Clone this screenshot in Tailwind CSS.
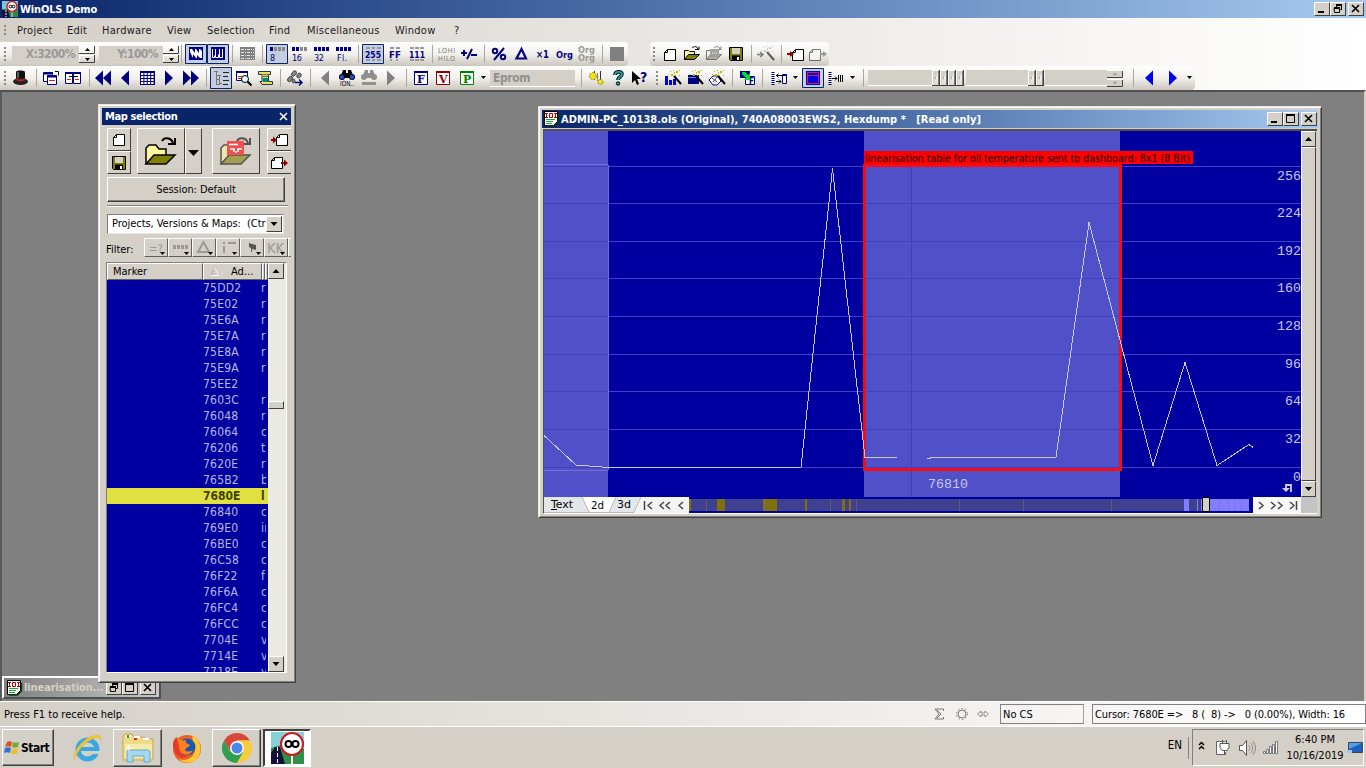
<!DOCTYPE html>
<html lang="en">
<head>
    <meta charset="UTF-8" />
    <title>WinOLS Demo</title>
    <script src="https://cdn.jsdelivr.net/npm/@tailwindcss/browser@4"></script>
</head>
<body class="w-[1366px] h-[768px] overflow-hidden flex flex-col bg-[#d4d0c8] text-black text-[11px] leading-none whitespace-nowrap font-['DejaVu_Sans_Condensed','DejaVu_Sans',sans-serif] [&_svg]:shrink-0">

<!-- Shared icons -->
<svg class="absolute w-0 h-0">
    <symbol id="app" viewBox="0 0 16 16">
        <rect width="16" height="16" fill="#7cc8d8"/><path d="M0 8h16v8H0z" fill="#2e8b45"/><path d="M0 9h6l2 7H0z" fill="#101040"/><path d="M4 9v7" stroke="#fff" stroke-dasharray="2 1"/><path d="M10 9v7" stroke="#ddd"/>
        <circle cx="10" cy="5.500" r="5" fill="#fff" stroke="#d02020" stroke-width="1.400"/><circle cx="8.400" cy="5.500" r="1.400" fill="none" stroke="#000"/><circle cx="11.600" cy="5.500" r="1.400" fill="none" stroke="#000"/>
    </symbol>
    <symbol id="doc" viewBox="0 0 16 16">
        <path d="M.5.500h13v10l-4 4h-9z" fill="#fff" stroke="#000"/><path d="M14.500 3v8l-4 4H2" fill="none" stroke="#064020" stroke-width="1.500"/><path d="M2 8.500h9M2 10.500h7M2 12.500h6" stroke="#20a040"/>
        <path d="M1 2.500h3M2.500 3v3M1 6.500h3M5.500 2.500h3v4h-3zM10 2.500h3M11.500 3v3M10 6.500h3" fill="none" stroke="#c00000"/>
    </symbol>
    <symbol id="page" viewBox="0 0 22 22"><path d="M8.500 5.500h8v11h-11v-8z" fill="#fff" stroke="#000"/><path d="M5.500 8.500h3v-3" fill="none" stroke="#000"/></symbol>
    <symbol id="open" viewBox="0 0 22 22">
        <path d="M3.500 16.500v-9h4l1 1h5v3" fill="#fff6a0" stroke="#000"/><path d="M3.500 16.500l4-5h11l-5 5z" fill="#808000" stroke="#000"/><path d="M11 5c2-2 5-2 6 1M14 6.500h4v-3" fill="none" stroke="#000"/>
    </symbol>
    <symbol id="save" viewBox="0 0 22 22"><path d="M4.500 4.500h13v13h-12l-1-1z" fill="#808000" stroke="#000"/><path d="M7 5h8v6H7z" fill="#d4d0c8"/><path d="M7 12.500h8V17H7z" fill="#000"/><path d="M12 14h2v3h-2z" fill="#fff"/></symbol>
    <symbol id="left" viewBox="0 0 22 22"><path d="M15 3.500v15l-8-7.500z"/></symbol>
    <symbol id="right" viewBox="0 0 22 22"><path d="M7 3.500v15l8-7.500z"/></symbol>
    <symbol id="wand" viewBox="0 0 22 22"><path d="M12 9l7 8" stroke="#000" stroke-width="2"/><path d="M8 4h1v1h-1zM11 3h1v1h-1zM14 4h2v2h-2zM9 7h2v2h-2zM13 8h1v1h-1zM17 8h1v1h-1zM6 7h1v1h-1zM12 5h1v2h-1zM17 3h1v1h-1z" fill="#c8b400"/></symbol>
    <symbol id="bino" viewBox="0 0 22 22"><path d="M7 4h3v3h2V4h3l3 8H4z"/><circle cx="6" cy="11" r="3"/><circle cx="16" cy="11" r="3"/></symbol>
    <symbol id="min" viewBox="0 0 14 12"><path d="M3 8h6v2H3z"/></symbol>
    <symbol id="max" viewBox="0 0 14 12"><path d="M2.500 1v8.500h8V1M2 1.500h9M2 2.500h9" fill="none" stroke="#000"/></symbol>
    <symbol id="rest" viewBox="0 0 14 12"><path d="M5 1.500h6M5.500 1v4M5 2.500h6M10.500 2v4.500H9M3 4.500h6M3 5.500h5.500V9.500h-5z" fill="none" stroke="#000"/></symbol>
    <symbol id="close" viewBox="0 0 14 12"><path d="M3 2l7 7M10 2l-7 7" fill="none" stroke="#000" stroke-width="1.600"/></symbol>
</svg>

<!-- Title bar -->
<div class="h-[18px] shrink-0 flex items-center pl-[2px] pr-[2px] bg-linear-to-r from-[#0a246a] to-[#a6caf0] text-white font-bold">
    <svg width="16" height="16"><use href="#app"/></svg>
    <span class="ml-[2px] flex-1 tracking-[-0.15px]">WinOLS Demo</span>
    <div class="flex [&>svg]:bg-[#d4d0c8] [&>svg]:border [&>svg]:border-t-white [&>svg]:border-l-white [&>svg]:border-r-[#404040] [&>svg]:border-b-[#404040]">
        <svg width="16" height="14"><use href="#min"/></svg>
        <svg width="16" height="14"><use href="#rest"/></svg>
        <svg width="16" height="14" class="ml-[2px]"><use href="#close"/></svg>
    </div>
</div>

<div class="h-[72px] shrink-0 flex flex-col bg-linear-to-r from-[#d4d0c8] to-white">
    <!-- Menu -->
    <div class="h-[24px] flex items-center text-[#202020] tracking-[0.25px]">
        <svg width="17" height="24" fill="#888"><path d="M4 7h2v2H4zM4 11h2v2H4zM4 15h2v2H4z"/></svg>
        <span class="w-[50px]">Project</span><span class="w-[35px]">Edit</span><span class="w-[65px]">Hardware</span><span class="w-[40px]">View</span><span class="w-[62px]">Selection</span><span class="w-[38px]">Find</span><span class="w-[88px]">Miscellaneous</span><span class="w-[59px]">Window</span><span>?</span>
    </div>

    <!-- Toolbar row 1 -->
    <div class="h-[24px] flex gap-[22px]">
        <div class="w-[628px] flex items-center rounded-r bg-linear-to-b from-white via-[#f2f0ec] to-[#cbc7be]">
            <svg width="12" height="22" fill="#888"><path d="M4 4h2v2H4zM4 8h2v2H4zM4 12h2v2H4zM4 16h2v2H4z"/></svg>
            <div class="w-[67px] h-[16px] pr-[4px] bg-[#d4d0c8] text-right font-bold text-[12px] leading-[17px] tracking-[-0.6px] text-[#999]">X:3200%</div>
            <svg width="16" height="17" viewBox="0 0 16 17"><path d="M.5 8V.5H15M.5 16V9.500H15" fill="none" stroke="#fff"/><path d="M0 7.500h15.500V0M0 16.500h15.500V9" fill="none" stroke="#404040"/><path d="M6 5h5L8.500 2zM6 12h5l-2.500 3z"/></svg>
            <div class="w-[64px] h-[16px] ml-[4px] pr-[5px] bg-[#d4d0c8] text-right font-bold text-[12px] leading-[17px] tracking-[-0.6px] text-[#999]">Y:100%</div>
            <svg width="16" height="17" viewBox="0 0 16 17"><path d="M.5 8V.5H15M.5 16V9.500H15" fill="none" stroke="#fff"/><path d="M0 7.500h15.500V0M0 16.500h15.500V9" fill="none" stroke="#404040"/><path d="M6 5h5L8.500 2zM6 12h5l-2.500 3z"/></svg>
            <svg width="6" height="18"><path d="M2.500 0v18" stroke="#aaa69e"/></svg>
            <svg width="22" height="22"><path d="M.5 1.500h21v19H.5z" fill="#c5cde0" stroke="#0a246a"/><path d="M4 4h14v13H4z" fill="#000080"/><path d="M5 6h2l3 4V6h1l3 4V6h1l2 2v7h-2l-3-3v3h-1l-3-4v4H8L5 9z" fill="#fff"/></svg>
            <svg width="22" height="22"><path d="M.5 1.500h21v19H.5z" fill="#c5cde0" stroke="#0a246a"/><path d="M4 4h14v13H4z" fill="#000080"/><path d="M5.500 6v8.500h2v-2M8.500 6v8.500h3v-3M12.500 6v8.500h3V6" fill="none" stroke="#fff"/></svg>
            <svg width="7" height="18"><path d="M3.500 0v18" stroke="#aaa69e"/></svg>
            <svg width="22" height="22"><path d="M4 4h15v13H4z" fill="#808080"/><path d="M5 6.500h13M5 9.500h13M5 12.500h13M5 15.500h13" stroke="#e8e6e2" stroke-dasharray="3 1 1 1"/></svg>
            <svg width="8" height="18"><path d="M4.500 0v18" stroke="#aaa69e"/></svg>
            <svg width="22" height="22"><path d="M.5 1.500h21v19H.5z" fill="#c5cde0" stroke="#0a246a"/><path d="M4 4h3v4H4z" fill="#000080"/><path d="M8 4h3v4H8zM12 4h3v4h-3zM16 4h3v4h-3z" fill="#888"/><text x="4" y="18" font-size="9" fill="#000080">8</text></svg>
            <svg width="22" height="22"><path d="M4 4h3v4H4zM8 4h3v4H8z" fill="#000080"/><path d="M12 4h3v4h-3zM16 4h3v4h-3z" fill="#888"/><text x="4" y="18" font-size="9" textLength="10" fill="#000080">16</text></svg>
            <svg width="22" height="22"><path d="M4 4h3v4H4zM8 4h3v4H8zM12 4h3v4h-3zM16 4h3v4h-3z" fill="#000080"/><text x="4" y="18" font-size="9" textLength="10" fill="#000080">32</text></svg>
            <svg width="22" height="22"><path d="M4 4h3v4H4zM8 4h3v4H8zM12 4h3v4h-3zM16 4h3v4h-3z" fill="#000080"/><text x="5" y="18" font-size="9" textLength="10" fill="#000080">Fl.</text></svg>
            <svg width="8" height="18"><path d="M4.500 0v18" stroke="#aaa69e"/></svg>
            <svg width="22" height="22" font-weight="bold" font-size="9"><path d="M.5 1.500h21v19H.5z" fill="#c5cde0" stroke="#0a246a"/><path d="M4 5h4M10 5h3M15 5h4M4 17h4M10 17h3M15 17h4" stroke="#999" stroke-width="2" fill="none"/><text x="3" y="14.500" textLength="16" lengthAdjust="spacingAndGlyphs" fill="#000080">255</text></svg>
            <svg width="22" height="22" font-weight="bold" font-size="9"><path d="M6 5h4M12 5h4M6 17h2M12 17h2" stroke="#999" stroke-width="2"/><text x="5" y="14.500" textLength="12" lengthAdjust="spacingAndGlyphs" fill="#000080">FF</text></svg>
            <svg width="22" height="22" font-weight="bold" font-size="9"><path d="M4 5h4M9 5h4M14 5h4M4 17h4M9 17h4M14 17h4" stroke="#999" stroke-width="2"/><text x="3" y="14.500" textLength="16" lengthAdjust="spacingAndGlyphs" fill="#000080">111</text></svg>
            <svg width="8" height="18"><path d="M4.500 0v18" stroke="#aaa69e"/></svg>
            <svg width="22" height="22" font-size="7" fill="#777"><text x="2" y="10" textLength="17">LOHI</text><text x="2" y="17.500" textLength="17">HILO</text></svg>
            <svg width="22" height="22"><path d="M3 10h6M6 7v6M13 12h6M9 16l5-10" stroke="#000080" stroke-width="2"/></svg>
            <svg width="8" height="18"><path d="M4.500 0v18" stroke="#aaa69e"/></svg>
            <svg width="22" height="22"><path d="M6 17L16 5" stroke="#000080" stroke-width="2"/><circle cx="7" cy="8" r="2.200" fill="none" stroke="#000080" stroke-width="2"/><circle cx="15" cy="14" r="2.200" fill="none" stroke="#000080" stroke-width="2"/></svg>
            <svg width="22" height="22"><path d="M11.500 6L6.500 15.500h9.500z" fill="none" stroke="#000080" stroke-width="2.200"/></svg>
            <svg width="22" height="22" font-weight="bold"><text x="4" y="15" font-size="11" textLength="13" lengthAdjust="spacingAndGlyphs" fill="#000080">×1</text></svg>
            <svg width="22" height="22" font-weight="bold"><text x="2" y="15" font-size="9.500" textLength="17" lengthAdjust="spacingAndGlyphs" fill="#000080">Org</text></svg>
            <svg width="22" height="22" font-weight="bold" font-size="9" fill="#999"><text x="2" y="9.500" textLength="17" lengthAdjust="spacingAndGlyphs">Org</text><text x="2" y="17.500" textLength="17" lengthAdjust="spacingAndGlyphs">Org</text></svg>
            <svg width="8" height="18"><path d="M4.500 0v18" stroke="#aaa69e"/></svg>
            <svg width="22" height="22"><path d="M4 4h14v14H4z" fill="#808080"/></svg>
        </div>
        <div class="w-[179px] flex items-center rounded bg-linear-to-b from-white via-[#f2f0ec] to-[#cbc7be]">
            <svg width="9" height="22" fill="#888"><path d="M3 4h2v2H3zM3 8h2v2H3zM3 12h2v2H3zM3 16h2v2H3z"/></svg>
            <svg width="22" height="22"><use href="#page" y="1"/></svg>
            <svg width="22" height="22"><use href="#open"/></svg>
            <svg width="22" height="22" class="grayscale opacity-50"><use href="#open"/><path d="M7 6h9v8H7z" fill="#555"/><path d="M9 10h5" stroke="#fff" stroke-dasharray="1 1"/></svg>
            <svg width="22" height="22"><use href="#save"/></svg>
            <svg width="8" height="18"><path d="M4.500 0v18" stroke="#aaa69e"/></svg>
            <svg width="22" height="22" class="grayscale opacity-60"><use href="#wand"/><path d="M2 11.500h6M5 9l3 2.500L5 14" stroke="#333" fill="none" stroke-width="1.500"/></svg>
            <svg width="8" height="18"><path d="M4.500 0v18" stroke="#aaa69e"/></svg>
            <svg width="22" height="22"><use href="#page" x="2" y="1"/><path d="M2 10h3V8l4 3-4 3v-2H2z" fill="#900000"/></svg>
            <svg width="22" height="22" class="opacity-50"><use href="#page" x="-3" y="1"/><path d="M13 10h3V8l4 3-4 3v-2h-3z" fill="#444"/></svg>
        </div>
    </div>

    <!-- Toolbar row 2 -->
    <div class="h-[24px] w-[1195px] flex items-center rounded-r bg-linear-to-b from-white via-[#f2f0ec] to-[#cbc7be]">
        <svg width="9" height="22" fill="#888"><path d="M4 4h2v2H4zM4 8h2v2H4zM4 12h2v2H4zM4 16h2v2H4z"/></svg>
        <svg width="22" height="22"><path d="M7 5c0-2 9-2 9 0v8H7z" fill="#111"/><ellipse cx="11.500" cy="14.500" rx="7.500" ry="3.500" fill="#222"/><path d="M7 12c3 2 6 2 9 0" stroke="#c02020" stroke-width="2" fill="none"/><path d="M9 5v6" stroke="#aaa"/></svg>
        <svg width="9" height="18"><path d="M5.500 0v18" stroke="#aaa69e"/></svg>
        <svg width="22" height="22" fill="#fff" stroke="#000080"><path d="M3.500 5.500h9v9h-9z"/><path d="M4 6.500h9" stroke-width="2"/><path d="M7.500 8.500h9v9h-9z"/><path d="M7 9.500h10" stroke-width="2"/><path d="M9 13.500h6" stroke="#d02020"/><path d="M15 4.500h3.500v4" fill="none" stroke="#000"/></svg>
        <svg width="22" height="22" fill="#fff" stroke="#000080"><path d="M3.500 5.500h7v11h-7zM11.500 5.500h7v11h-7z"/><path d="M3 6h8M11 6h8" stroke-width="2"/><path d="M5 12.500h4M13 12.500h4" stroke="#d02020"/><path d="M7 9.500h3M12 9.500h4" stroke="#000"/></svg>
        <svg width="8" height="18"><path d="M5.500 0v18" stroke="#aaa69e"/></svg>
        <svg width="22" height="22" fill="#000080"><path d="M11 3.500v15L3 11zM19 3.500v15L11 11z"/></svg>
        <svg width="22" height="22" fill="#000080"><use href="#left"/></svg>
        <svg width="22" height="22"><path d="M4 4h15v14H4z" fill="#000080"/><path d="M5 7h13M5 10h13M5 13h13M5 16h13" stroke="#fff" stroke-width="2" stroke-dasharray="2.400 1"/></svg>
        <svg width="22" height="22" fill="#000080"><use href="#right"/></svg>
        <svg width="22" height="22" fill="#000080"><path d="M3 3.500v15l8-7.500zM11 3.500v15l8-7.500z"/></svg>
        <svg width="8" height="18"><path d="M4.500 0v18" stroke="#aaa69e"/></svg>
        <svg width="22" height="22"><path d="M.5.5h21v21H.5z" fill="#c5cde0" stroke="#0a246a"/><path d="M4 4.500h4M6.500 5v13M7 8.500h4M9.500 9v9M7 12.500h3M10 16.500h2M7 17.500h3" fill="none" stroke="#777"/><path d="M13 5.500h6M13 9.500h5M13 13.500h6M13 17.500h5" stroke="#222"/></svg>
        <svg width="22" height="22"><path d="M4.500 4.500h11v9h-11z" fill="#fff" stroke="#000080"/><path d="M4 5h12" stroke="#000080" stroke-width="2"/><path d="M6 9.500h6M6 11.500h4" stroke="#d02020"/><circle cx="13" cy="12" r="3.500" fill="#dff" stroke="#000"/><path d="M15.500 14.500l4 4" stroke="#000" stroke-width="2"/></svg>
        <svg width="22" height="22"><path d="M4.500 4.500h12v3h-2v7h4v3H8l-2-3h2v-7H4.500z" fill="#e8e070" stroke="#333"/><path d="M9 11h5v4H9z" fill="#088"/><path d="M9 7.500h5M9 9.500h5" stroke="#333" stroke-width=".7"/></svg>
        <svg width="8" height="18"><path d="M4.500 0v18" stroke="#aaa69e"/></svg>
        <svg width="22" height="22"><g fill="#888" stroke="#333" stroke-width=".8"><ellipse cx="6" cy="12" rx="2" ry="3" transform="rotate(40 6 12)"/><ellipse cx="10" cy="6.500" rx="2" ry="3" transform="rotate(40 10 6.500)"/><ellipse cx="9.500" cy="14" rx="1.500" ry="2"/><ellipse cx="15" cy="8.500" rx="2" ry="2.600" transform="rotate(40 15 8.500)"/></g><path d="M11 15.500h7M15 12.500l3 3-3 3" stroke="#000080" fill="none" stroke-width="1.400"/></svg>
        <svg width="8" height="18"><path d="M4.500 0v18" stroke="#aaa69e"/></svg>
        <svg width="22" height="22" fill="#808080"><use href="#left"/></svg>
        <svg width="22" height="22"><use href="#bino" y="-1"/><circle cx="6" cy="10" r="2" fill="#2050ff"/><circle cx="16" cy="10" r="2" fill="#2050ff"/><text x="4" y="19" font-size="7" textLength="14" lengthAdjust="spacingAndGlyphs">ION..</text></svg>
        <svg width="22" height="22" fill="#909090"><use href="#bino" y="-1"/><path d="M4 15h14v3H4z"/></svg>
        <svg width="22" height="22" fill="#808080"><use href="#right"/></svg>
        <svg width="8" height="18"><path d="M4.500 0v18" stroke="#aaa69e"/></svg>
        <svg width="22" height="22" font-weight="bold" font-size="11" class="font-['DejaVu_Serif',serif]"><path d="M4.500 4.500h13v13h-13z" fill="#fff" stroke="#000080"/><path d="M4 5h14" stroke="#000080" stroke-width="2"/><text x="7" y="16" fill="#000080">F</text></svg>
        <svg width="22" height="22" font-weight="bold" font-size="11" class="font-['DejaVu_Serif',serif]"><path d="M4.500 4.500h13v13h-13z" fill="#fff" stroke="#900000"/><path d="M4 5h14" stroke="#900000" stroke-width="2"/><text x="7" y="16" fill="#900000">V</text></svg>
        <svg width="24" height="22" font-weight="bold" font-size="11" class="font-['DejaVu_Serif',serif]"><path d="M6.500 4.500h13v13h-13z" fill="#fff" stroke="#008000"/><path d="M6 5h14" stroke="#008000" stroke-width="2"/><text x="9" y="16" fill="#008000">P</text></svg>
        <svg width="12" height="4"><path d="M3 0h5L5.500 3z"/></svg>
        <div class="w-[86px] h-[17px] pl-[3px] bg-[#d4d0c8] border-b border-white font-bold text-[12px] leading-[17px] tracking-[-0.4px] text-[#909090]">Eprom</div>
        <svg width="10" height="18"><path d="M6.500 0v18" stroke="#aaa69e"/></svg>
        <svg width="22" height="22"><path d="M9.500 4v9M15.500 4v10" stroke="#333"/><circle cx="8" cy="9" r="3.500" fill="#f0e020" stroke="#a09000" stroke-dasharray="2 1"/><circle cx="15.500" cy="15" r="2.600" fill="#f0e020" stroke="#a09000" stroke-dasharray="2 1"/><path d="M12.500 6v8" stroke="#888"/></svg>
        <svg width="22" height="22"><path d="M8 8c0-4 7-4 7-1 0 3-4 3-4 6" fill="none" stroke="#000" stroke-width="3.600"/><path d="M8 8c0-4 7-4 7-1 0 3-4 3-4 6" fill="none" stroke="#10b0b0" stroke-width="1.800"/><circle cx="11" cy="16.500" r="1.700" fill="#10b0b0" stroke="#000"/></svg>
        <svg width="22" height="22" font-weight="bold"><path d="M3 4v12l3-3 2 5 2-1-2-5h4z"/><text x="11" y="15" font-size="14" fill="#000080">?</text></svg>
        <svg width="11" height="22" fill="#888"><path d="M5 4h2v2H5zM5 8h2v2H5zM5 12h2v2H5zM5 16h2v2H5z"/></svg>
        <svg width="22" height="22"><path d="M3 9h3v9H3zM7 13h3v5H7zM11 12h3v6h-3z" fill="#0000e0"/><use href="#wand"/></svg>
        <svg width="22" height="22"><path d="M4 8h11v9H4z" fill="#000080"/><path d="M4 10.500h10" stroke="#6080e0"/><use href="#wand"/></svg>
        <svg width="22" height="22"><path d="M3 13l4-4h5l3 5-4 4H7z" fill="#fff" stroke="#000080"/><path d="M6 11l5 4M11 10l-4 5" stroke="#444"/><use href="#wand"/></svg>
        <svg width="8" height="18"><path d="M4.500 0v18" stroke="#aaa69e"/></svg>
        <svg width="22" height="22" font-weight="bold"><path d="M4 4h10v7H4z" fill="#000080"/><path d="M9.500 9.500h9v8h-9z" fill="#fff" stroke="#000080"/><text x="13" y="17" font-size="8" fill="#000080">F</text><path d="M6 5h3l3 3 2-2v7H8l2-2-4-4z" fill="#00e030"/></svg>
        <svg width="10" height="18"><path d="M4.500 0v18" stroke="#aaa69e"/></svg>
        <svg width="22" height="22"><path d="M5 5v13" stroke="#000080" stroke-width="3" stroke-dasharray="1 1"/><path d="M8 8.500h6M10.500 6.500l-2 2 2 2M8 14.500h5M11 12.500l2 2-2 2" fill="none" stroke="#000"/><path d="M14.500 7.500h4v9h-4z" fill="#fff" stroke="#000080"/><path d="M14 8.500h5" stroke="#000080"/></svg>
        <svg width="12" height="4"><path d="M3 0h5L5.500 3z"/></svg>
        <svg width="22" height="22"><path d="M.5 1.500h21v19H.5z" fill="#c5cde0" stroke="#0a246a"/><path d="M4 4h14v14H4z" fill="#0000e0"/><path d="M5.500 5.500h11v11h-11zM5.500 8.500h11" fill="none" stroke="#e02040"/></svg>
        <svg width="23" height="22"><path d="M6 5v13" stroke="#000080" stroke-width="3" stroke-dasharray="1 1"/><path d="M8 11.500h5M11 9.500l2 2-2 2M14.500 8v7M16.500 8v7M18.500 8v7" fill="none" stroke="#000"/></svg>
        <svg width="12" height="4"><path d="M3 0h5L5.500 3z"/></svg>
        <svg width="9" height="18"><path d="M4.500 0v18" stroke="#aaa69e"/></svg>
        <div class="w-[65px] h-[16px] bg-[#d4d0c8] border-b border-white"></div>
        <svg width="34" height="18"><path d="M.5 17V1.500H7M8.500 17V1.500H15M16.500 17V1.500H23M24.500 17V1.500H31" fill="#d4d0c8" stroke="#fff"/><path d="M0 16.500h32M7.500 1v16M15.500 1v16M23.500 1v16M31.500 1v16" stroke="#404040"/><path d="M6.500 2v14M14.500 2v14M22.500 2v14M30.500 2v14" stroke="#808080"/><path d="M3 9h1M11 9h1M19 9h1M27 9h1" stroke="#888"/></svg>
        <div class="w-[62px] h-[16px] bg-[#d4d0c8] border-b border-white"></div>
        <svg width="17" height="18"><path d="M.5 17V1.500H7M8.500 17V1.500H15" fill="#d4d0c8" stroke="#fff"/><path d="M0 16.500h16M7.500 1v16M15.500 1v16" stroke="#404040"/><path d="M6.500 2v14M14.500 2v14" stroke="#808080"/><path d="M3 9h1M11 9h1" stroke="#888"/></svg>
        <div class="w-[63px] h-[16px] bg-[#d4d0c8] border-b border-white"></div>
        <svg width="17" height="17"><path d="M0 1h15v6H0zM0 10h15v6H0z" fill="#d4d0c8"/><path d="M0 .5h16M0 9.500h16" stroke="#fff"/><path d="M0 7.500h15.500V1M0 16.500h15.500V10" fill="none" stroke="#404040"/><path d="M6 5h4L8 3zM6 12h4l-2 2z" fill="#888"/></svg>
        <svg width="14" height="18"><path d="M9.500 0v18" stroke="#aaa69e"/></svg>
        <svg width="24" height="22" fill="#0000f0"><use href="#left" width="22"/></svg>
        <svg width="24" height="22" fill="#0000f0"><use href="#right" width="22"/></svg>
        <svg width="9" height="4"><path d="M1 0h5L3.500 3z"/></svg>
    </div>
</div>

<!-- MDI workspace -->
<div class="relative flex-1 overflow-hidden bg-[#808080] border-t-2 border-l-2 border-r-2 border-l-[#5a5a5a] border-t-[#505050] border-r-[#d4d0c8]">

    <!-- Minimized child -->
    <div class="absolute left-0 top-[584px] w-[159px] h-[23px] flex items-center pl-[3px] bg-linear-to-r from-[#808080] to-[#c8c8c8] border-2 border-t-white border-l-white border-r-[#505050] border-b-[#505050] font-bold text-[#d4d0c8]">
        <svg width="16" height="16"><use href="#doc"/></svg>
        <span class="ml-[1px] w-[82px] tracking-[-0.1px]">linearisation...</span>
        <div class="flex [&>svg]:bg-[#d4d0c8] [&>svg]:border [&>svg]:border-t-white [&>svg]:border-l-white [&>svg]:border-r-[#404040] [&>svg]:border-b-[#404040]">
            <svg width="16" height="14"><use href="#rest"/></svg>
            <svg width="16" height="14"><use href="#max"/></svg>
            <svg width="16" height="14" class="ml-[2px]"><use href="#close"/></svg>
        </div>
    </div>

    <!-- Map selection -->
    <div class="absolute left-[96px] top-[12px] w-[198px] h-[579px] p-[3px] pr-[4px] flex flex-col bg-[#d4d0c8] border border-t-[#e8e6e0] border-l-[#e8e6e0] border-r-[#404040] border-b-[#404040] shadow-[inset_1px_1px_#fff,inset_-1px_-1px_#808080]">
        <div class="h-[17px] shrink-0 flex items-center pl-[3px] bg-[#0a246a] text-white font-bold">
            <span class="flex-1 tracking-[-0.4px]">Map selection</span>
            <svg width="14" height="12" viewBox="0 0 14 12"><path d="M3 2l7 7M10 2l-7 7" stroke="#fff" stroke-width="1.500"/></svg>
        </div>
        <div class="flex mt-[3px] ml-[5px] h-[46px] [&_svg]:border [&_svg]:border-t-white [&_svg]:border-l-white [&_svg]:border-r-[#404040] [&_svg]:border-b-[#404040]">
            <div>
                <svg width="24" height="23" viewBox="0 0 22 21"><use href="#page" width="22" height="22"/></svg>
                <svg width="24" height="23" viewBox="0 0 22 21"><use href="#save" width="22" height="22"/></svg>
            </div>
            <svg class="ml-[6px]" width="48" height="46" viewBox="0 0 46 44"><path d="M8 35V19l3-3h7l3 4h7v6" fill="#fff6a0" stroke="#000" stroke-width="1.500"/><path d="M8 35l8-9h21l-9 9z" fill="#808000" stroke="#000" stroke-width="1.500"/><path d="M24 12c2-4 9-4 11 2M30 15h7V9" fill="none" stroke="#000" stroke-width="2"/></svg>
            <svg width="17" height="46" viewBox="0 0 15 44"><path d="M2 21h11l-5.500 6z"/></svg>
            <svg class="ml-[10px]" width="48" height="46" viewBox="0 0 46 44"><g opacity=".6"><path d="M8 35V19l3-3h7l3 4h7v6" fill="#fff6a0" stroke="#000" stroke-width="1.500"/><path d="M8 35l8-9h21l-9 9z" fill="#808000" stroke="#000" stroke-width="1.500"/><path d="M24 12c2-4 9-4 11 2M30 15h7V9" fill="none" stroke="#000" stroke-width="2"/></g><path d="M14 12h17v14H14z" fill="#f05050"/><path d="M16 15.500h9M17 20h4v3M29 20h-4v3M22 23h2" fill="none" stroke="#fff" stroke-width="1.500"/></svg>
            <div class="ml-[7px] w-[24px] overflow-hidden">
                <svg width="25" height="23" viewBox="0 0 23 21"><use href="#page" x="3" width="22" height="22"/><path d="M3 10h2V7.500l4 3.500-4 3.500V12H3z" fill="#900000"/></svg>
                <svg width="25" height="23" viewBox="0 0 23 21"><use href="#page" x="-2" width="22" height="22"/><path d="M13 10h3V7.500l4 3.500-4 3.500V12h-3z" fill="#900000"/></svg>
            </div>
        </div>
        <div class="mt-[3px] ml-[5px] w-[178px] h-[25px] text-center leading-[24px] tracking-[-0.05px] border border-t-white border-l-white border-r-[#404040] border-b-[#404040] shadow-[inset_-1px_-1px_#808080]">Session: Default</div>
        <div class="mt-[3px] ml-[5px] w-[181px] h-[2px] bg-white border-t border-[#808080]"></div>
        <div class="mt-[7px] ml-[5px] w-[177px] h-[20px] p-[1px] flex bg-white border border-t-[#808080] border-l-[#808080] border-r-[#e8e6e0] border-b-[#e8e6e0]">
            <span class="w-[157px] pl-[3px] leading-[16px] tracking-[-0.05px]">Projects, Versions &amp; Maps:&nbsp; (Ctr</span>
            <svg width="16" height="16" class="bg-[#d4d0c8] border border-t-white border-l-white border-r-[#404040] border-b-[#404040]"><path d="M3.500 5h7L7 9z"/></svg>
        </div>
        <div class="flex items-center mt-[2px] ml-[4px] h-[23px]">
            <span class="w-[38px] pt-[4px]">Filter:</span>
            <div class="flex flex-1 h-[19px] overflow-hidden [&>svg]:border [&>svg]:border-t-white [&>svg]:border-l-white [&>svg]:border-r-[#606060] [&>svg]:border-b-[#606060]">
                <svg width="24" height="19"><text x="4" y="14" font-size="13" textLength="14" lengthAdjust="spacingAndGlyphs" fill="#999">=?</text><path d="M15 13h5l-2.500 3z"/></svg>
                <svg width="24" height="19"><path d="M4 6h3v4H4zM8 6h3v4H8zM12 6h3v4h-3zM16 6h3v4h-3z" fill="#999"/><path d="M15 13h5l-2.500 3z"/></svg>
                <svg width="24" height="19"><path d="M10.500 3L5 13h11z" fill="none" stroke="#999" stroke-width="2"/><path d="M15 13h5l-2.500 3z"/></svg>
                <svg width="24" height="19"><path d="M6 4h2M7 7v7M11 4h8" stroke="#999" stroke-width="2"/><path d="M15 13h5l-2.500 3z"/></svg>
                <svg width="24" height="19"><path d="M8 4l3 1 4 1v5l-4-1v3h-1v-4l-2-1z" fill="#555"/><path d="M15 13h5l-2.500 3z"/></svg>
                <svg width="24" height="19"><text x="2" y="14" font-size="14" textLength="17" lengthAdjust="spacingAndGlyphs" fill="#999">KK</text><path d="M15 13h5l-2.500 3z"/></svg>
                <svg width="8" height="19"></svg>
            </div>
        </div>
        <div class="mt-[3px] ml-[4px] w-[181px] h-[411px] flex border border-t-[#808080] border-l-[#808080] border-r-white border-b-white">
            <div class="w-[161px] overflow-hidden bg-[#0000a0]">
                <div class="h-[17px] flex bg-[#d4d0c8] leading-[16px] [&>div]:border [&>div]:border-t-white [&>div]:border-l-white [&>div]:border-r-[#606060] [&>div]:border-b-[#606060]">
                    <div class="w-[96px] pl-[5px]">Marker</div>
                    <div class="w-[59px] flex items-center gap-[12px] pl-[6px]"><svg width="9" height="9"><path d="M4.500 1L1 8h7z" fill="none" stroke="#aaa"/><path d="M1 8.500h7.500L4.500 1" fill="none" stroke="#fff"/></svg>Ad...</div>
                    <div class="w-[3px]"></div>
                    <div class="w-[3px]"></div>
                </div>
                <div id="rows"></div>
            </div>
            <div class="flex-1 flex flex-col justify-between relative bg-[#ebe9e4]">
                <svg width="16" height="16" class="bg-[#d4d0c8] border border-t-white border-l-white border-r-[#404040] border-b-[#404040]"><path d="M3.500 9h7L7 5z"/></svg>
                <div class="absolute top-[138px] w-[16px] h-[8px] bg-[#d4d0c8] border border-t-white border-l-white border-r-[#404040] border-b-[#404040]"></div>
                <svg width="16" height="16" class="bg-[#d4d0c8] border border-t-white border-l-white border-r-[#404040] border-b-[#404040]"><path d="M3.500 5h7L7 9z"/></svg>
            </div>
        </div>
    </div>

    <!-- Hexdump window -->
    <div class="absolute left-[536px] top-[14px] w-[784px] h-[412px] p-[3px] bg-[#d4d0c8] border border-t-[#e8e6e0] border-l-[#e8e6e0] border-r-[#404040] border-b-[#404040] shadow-[inset_1px_1px_#fff,inset_-1px_-1px_#808080] flex flex-col">
        <div class="h-[18px] shrink-0 flex items-center pl-[2px] pr-[1px] bg-linear-to-r from-[#0a246a] to-[#a6caf0] text-white font-bold">
            <svg width="16" height="16"><use href="#doc"/></svg>
            <span class="ml-[1px] flex-1 tracking-[0.04px]">ADMIN-PC_10138.ols (Original), 740A08003EWS2, Hexdump *&nbsp;&nbsp; [Read only]</span>
            <div class="flex [&>svg]:bg-[#d4d0c8] [&>svg]:border [&>svg]:border-t-white [&>svg]:border-l-white [&>svg]:border-r-[#404040] [&>svg]:border-b-[#404040]">
                <svg width="16" height="14"><use href="#min"/></svg>
                <svg width="16" height="14"><use href="#max"/></svg>
                <svg width="16" height="14" class="ml-[2px]"><use href="#close"/></svg>
            </div>
        </div>
        <div class="mt-[1px] ml-px mr-[1px] flex-1 flex flex-col border-t-2 border-l border-[#505050] border-b border-b-white">
            <div class="flex h-[366px]">
                <svg width="757" height="366" viewBox="544 131 757 366" shape-rendering="crispEdges" class="bg-[#0000a0]">
                    <path d="M544 131h64v366h-64zM864 131h256v366H864z" fill="#5050c8"/>
                    <g id="grid" stroke="#4040c0"></g>
                    <path d="M911.500 166v331" stroke="#4040b4"/>
                    <path d="M544 164.500h64M544 470.500h64M608.500 165v305" stroke="#7070d8"/>
                    <path d="M863 164h259v307H863zM866 167v301h253V167z" fill="#f80c14" fill-rule="evenodd"/>
                    <path d="M864 151h329v13H864z" fill="#ff0000"/>
                    <text x="865" y="162" font-size="11" textLength="325" lengthAdjust="spacingAndGlyphs" fill="#200000">linearisation table for oil temperature sent to dashboard: 8x1 (8 Bit)</text>
                    <path d="M544 435.500l32 29.500 32 2.500h193l31.500-299 32.500 289h32M927 458.500h3l1-1h125l33-235 64 243 32-103 32 103 32-21 4 3" fill="none" stroke="#c8c8e8"/>
                    <g id="scale" font-size="13.300" fill="#c8c8e8" class="font-['Liberation_Mono',monospace]"></g>
                    <g shape-rendering="auto"><path d="M1291 492v-7h-5v4" fill="none" stroke="#d0d0e8" stroke-width="1.800"/><path d="M1282 488h8l-4 4z" fill="#d0d0e8"/></g>
                </svg>
                <div class="flex-1 flex flex-col bg-[#d4d0c8]">
                    <svg width="15" height="16" class="border border-t-white border-l-white border-r-[#404040] border-b-[#404040]"><path d="M3 9h7L6.500 5z"/></svg>
                    <div class="flex-1 w-[15px] border border-t-white border-l-white border-r-[#404040] border-b-[#404040]"></div>
                    <svg width="15" height="16" class="border border-t-white border-l-white border-r-[#404040] border-b-[#404040]"><path d="M3 5h7L6.500 9z"/></svg>
                </div>
            </div>
            <!-- View tabs and overview strip -->
            <div class="flex h-[16px]">
                <svg width="145" height="16" font-size="11"><path d="M0 0h145v16H0z" fill="#f4f4f4"/><path d="M0 0h38l8 15H0zM70 0h26l-6 15H64z" fill="#e4e7ea"/><path d="M38 0h34l-7 15H46z" fill="#fff"/><path d="M38 0l7 15M72 0l-7 15M97 0l-7 15M0 15.500h90" stroke="#b8b8b8" fill="none"/><text x="7" y="11" textLength="22" lengthAdjust="spacingAndGlyphs">Text</text><path d="M7 12.500h6" stroke="#000"/><text x="47" y="12" textLength="13" lengthAdjust="spacingAndGlyphs">2d</text><text x="73" y="11" textLength="14" lengthAdjust="spacingAndGlyphs">3d</text>
                    <path d="M100.500 4v9M108 5l-4 3.500 4 3.500M120 5l-4 3.500 4 3.500M126 5l-4 3.500 4 3.500M139 5l-4 3.500 4 3.500" fill="none" stroke="#444" stroke-width="1.500"/></svg>
                <svg width="564" height="16" viewBox="689 0 564 16" shape-rendering="crispEdges"><path d="M689 0h564v16H689z" fill="#0000a0"/><path d="M689 2h560v12H689z" fill="#404090"/><path d="M689 2h2v12h-2zM717 2h8v12h-8zM763 2h14v12h-14zM805 2h2v12h-2zM842 2h3v12h-3zM849 2h2v12h-2z" fill="#80700c"/><path d="M706.500 2v12M830.500 2v12M856.500 2v12M959.500 2v12M1023.500 2v12M1111.500 2v12" stroke="#606060"/><path d="M764.500 2v12" stroke="#b06030"/><path d="M767.500 2v12" stroke="#50802c"/><path d="M1184 2h5v12h-5zM1197 2h1v12h-1zM1201 2h48v12h-48z" fill="#8080ff"/><path d="M1219.500 2v12M1228.500 2v12M1234.500 2v12M1241.500 2v12" stroke="#9068e8"/><path d="M1202.500.5h7v14h-7z" fill="#d4d0c8" stroke="#000"/></svg>
                <svg width="48" height="16"><path d="M0 0h48v16H0z" fill="#f8f8f8"/><path d="M6 5l4 3.500L6 12M18 5l4 3.500-4 3.500M25 5l4 3.500-4 3.500M37 5l4 3.500-4 3.500M43.500 4v9" fill="none" stroke="#444" stroke-width="1.500"/></svg>
                <div class="flex-1 bg-[#c4c4c4]"></div>
            </div>
        </div>
    </div>
</div>

<!-- Status bar -->
<div class="h-[25px] shrink-0 flex items-center border-t border-white bg-linear-to-r from-[#d4d0c8] to-white pl-[4px]">
    <span class="flex-1">Press F1 to receive help.</span>
    <svg width="70" height="16" fill="none" stroke="#777"><path d="M13.500 5V3H5l4 5-4 5h8.500v-2M7 4l4 4-4 4"/><circle cx="32" cy="8" r="4"/><circle cx="32" cy="8" r="5.500" stroke-dasharray="1.500 2"/><path d="M51 5l-3.500 3 3.500 3V9h4v2l3.500-3L55 5v2h-4z" stroke-width=".8"/></svg>
    <div class="w-[84px] h-[20px] pl-[2px] leading-[19px] border border-[#808080] border-r-[#a0a0a0]">No CS</div>
    <div class="w-[274px] h-[20px] ml-[8px] pl-[2px] leading-[19px] border border-[#808080] tracking-[-0.12px]">Cursor: 7680E =&gt;&nbsp;&nbsp; 8 (&nbsp; 8) -&gt;&nbsp;&nbsp; 0 (0.00%), Width: 16</div>
</div>

<!-- Taskbar -->
<div class="h-[42px] shrink-0 flex items-center pl-[2px] border-t border-white bg-[#d4d0c8]">
    <div class="w-[52px] h-[37px] flex items-center pl-[1px] font-bold border border-t-white border-l-white border-r-[#404040] border-b-[#404040] shadow-[inset_-1px_-1px_#808080]">
        <svg width="17" height="16"><path d="M3 2c2-1 4-1 5 0L7 7C5 6 3 6 1 7z" fill="#e05020"/><path d="M9 2c2 1 4 1 6 0l-1 5c-2 1-4 1-6 0z" fill="#70b030"/><path d="M1 8c2-1 4-1 6 0l-1 5c-2-1-4-1-6 0z" fill="#3070d0"/><path d="M8 8.500c2 1 4 1 6 0l-1 5c-2 1-4 1-6 0z" fill="#f0c020"/></svg>
        <span class="text-[12px] tracking-[-0.5px]">Start</span>
    </div>
    <svg class="ml-[18px]" width="32" height="32"><circle cx="15.500" cy="17.500" r="9.500" fill="none" stroke="#38a8e0" stroke-width="5"/><path d="M8 15h19v4H8z" fill="#38a8e0"/><path d="M20 19h10v3H20z" fill="#d4d0c8"/><path d="M3 29c-6-5 9-27 23-26 4 1 4 4 2 8 1-4 0-6-4-5C14 8 3 21 3 29z" fill="#f0c030"/></svg>
    <div class="w-[49px] h-[38px] ml-[9px] flex items-center justify-center border border-t-white border-l-white border-r-[#404040] border-b-[#404040] shadow-[inset_-1px_-1px_#808080]">
        <svg width="34" height="32"><path d="M2 4l2-2h7l2 3h10l2 2h7v21H2z" fill="#f0dc88" stroke="#c8a850"/><path d="M5 4h5M13 5h6M22 7h6" stroke="#fff" stroke-width="2"/><path d="M7 3v3" stroke="#30a040" stroke-width="2"/><path d="M13 7h3" stroke="#d03020" stroke-width="2"/><path d="M4 12h27v14H4z" fill="#f8eaa8"/><path d="M6 30V20c0-2 1-2 2-2h18c2 0 3 1 3 2v10h-6v-6H12v6z" fill="#a8d8f0" stroke="#60a8d0"/><path d="M8 13v6M5 16h6" stroke="#fff"/></svg>
    </div>
    <svg class="ml-[9px]" width="32" height="32"><circle cx="16" cy="17" r="14" fill="#f06020"/><path d="M22 3c8 6 10 16 4 24-5 5-14 5-18 0 8 3 16-2 16-10 0-6-4-8-2-14z" fill="#ffc830"/><circle cx="16" cy="15" r="8.500" fill="#1858b0"/><path d="M7 7c3 1 5 2 8 1-1 3 2 4 4 5-2 3-4 2-5 5 2 2 5 2 8 0-3 8-15 5-15-4z" fill="#ff8020"/><path d="M2 12c0-3 2-6 4-7 0 4 2 6 2 10 0 6 4 9 9 9-8 5-15-2-15-12z" fill="#e83828"/></svg>
    <div class="w-[49px] h-[38px] ml-[9px] flex items-center justify-center border border-t-white border-l-white border-r-[#404040] border-b-[#404040] shadow-[inset_-1px_-1px_#808080]">
        <svg width="32" height="32" viewBox="-16 -16 32 32"><path d="M-13-7.500A15 15 0 0 1 13-7.500H0L-6.500 4z" fill="#d84838"/><path d="M-13-7.500A15 15 0 0 0 0 15L6.500 4H-6.500z" fill="#30a050"/><path d="M13-7.500A15 15 0 0 1 0 15L6.500 4 0-7.500z" fill="#f8cc38"/><circle r="7" fill="#fff"/><circle r="5.500" fill="#4a86e8"/></svg>
    </div>
    <div class="w-[48px] h-[38px] ml-[2px] flex items-center justify-center bg-white border-2 border-t-[#404040] border-l-[#404040] border-r-white border-b-white">
        <svg width="33" height="32"><path d="M0 0h33v32H0z" fill="#88d0d8"/><path d="M0 16l10-3 23 4v15H0z" fill="#309048"/><path d="M4 15h5l5 17H0V21z" fill="#101038"/><path d="M6.500 15v17" stroke="#fff" stroke-dasharray="4 2"/><path d="M21 20v12" stroke="#fff" stroke-width="2"/><circle cx="21" cy="12" r="11" fill="#fff" stroke="#d01818" stroke-width="2"/><circle cx="17.500" cy="12" r="3" fill="none" stroke="#000" stroke-width="2"/><circle cx="24.500" cy="12" r="3" fill="none" stroke="#000" stroke-width="2"/></svg>
    </div>
    <span class="ml-auto mb-[4px] text-[11.500px]">EN</span>
    <div class="ml-[6px] w-px h-[22px] bg-[#808080]"></div>
    <div class="ml-[3px] mr-[2px] w-[172px] h-[37px] flex items-center border border-t-[#808080] border-l-[#808080] border-r-white border-b-white">
        <svg width="90" height="36" fill="none" stroke="#555"><path d="M6 15l2.500-2.500L11 15M6 19l2.500-2.500L11 19" stroke="#000" stroke-width="1.500"/><path d="M32.500 22v2.500h-9v-13h9" stroke="#666" fill="#fff"/><path d="M27 13.500h9v4l-2 3h-5l-2-3zM29.500 10v3M33.500 10v3M31.500 21v4" fill="#fff"/><path d="M46.500 15.500h3l4-5v15l-4-5h-3z" fill="#fff"/><path d="M55.500 15c2 2 2 4 0 6M57.500 13c3 3 3 7 0 10M59.500 11c4 4 4 10 0 14" stroke="#888"/><path d="M70.500 21.500h2v2h-2zM73.500 19.500h2v4h-2zM76.500 16.500h2v7h-2zM79.500 14.500h2v9h-2zM82.500 11.500h2v12h-2z" stroke="#777" fill="#fff"/></svg>
        <div class="w-[64px] text-center leading-[16px]">6:40 PM<br>10/16/2019</div>
        <svg width="16" height="16"><path d="M1.500 2.500h14v10h-14z" fill="#2060c0" stroke="#444"/><path d="M2 3h13L2 9z" fill="#50a0f0"/><path d="M0 10h5v3H0z" fill="#a0c8f0"/></svg>
    </div>
</div>

<script>
    const rows = [
        ["75DD2", "r"], ["75E02", "r"], ["75E6A", "r"], ["75E7A", "r"], ["75E8A", "r"], ["75E9A", "r"], ["75EE2", ""],
        ["7603C", "r"], ["76048", "r"], ["76064", "c"], ["76206", "t"], ["7620E", "r"], ["765B2", "b"], ["7680E", "l"],
        ["76840", "c"], ["769E0", "in"], ["76BE0", "c"], ["76C58", "c"], ["76F22", "f"], ["76F6A", "c"], ["76FC4", "c"],
        ["76FCC", "c"], ["7704E", "v"], ["7714E", "v"], ["7718E", "v"]
    ];
    document.getElementById("rows").innerHTML = rows.map(([addr, name]) => `
        <div class="${addr === "7680E" ? "bg-[#e0e040] text-[#404000] font-bold" : "text-[#b8b8e4] tracking-[0.2px]"} h-[16px] flex pl-[96px] text-[12px] leading-[16px]">
            <span class="w-[58px]">${addr}</span><span class="w-[5px] overflow-hidden">${name}</span>
        </div>`).join("");

    // horizontal lines every 32 units, label just under each
    const ys = [166, 203, 241, 278, 316, 354, 391, 429, 467];
    document.getElementById("grid").innerHTML = ys.map(y => `<path d="M544 ${y + 0.5}h757"/>`).join("");
    document.getElementById("scale").innerHTML = ys.map((y, i) =>
        `<text x="1301" y="${y + 14}" text-anchor="end">${256 - i * 32}</text>`).join("") +
        `<text x="928" y="488">76810</text>`;
</script>
</body>
</html>
